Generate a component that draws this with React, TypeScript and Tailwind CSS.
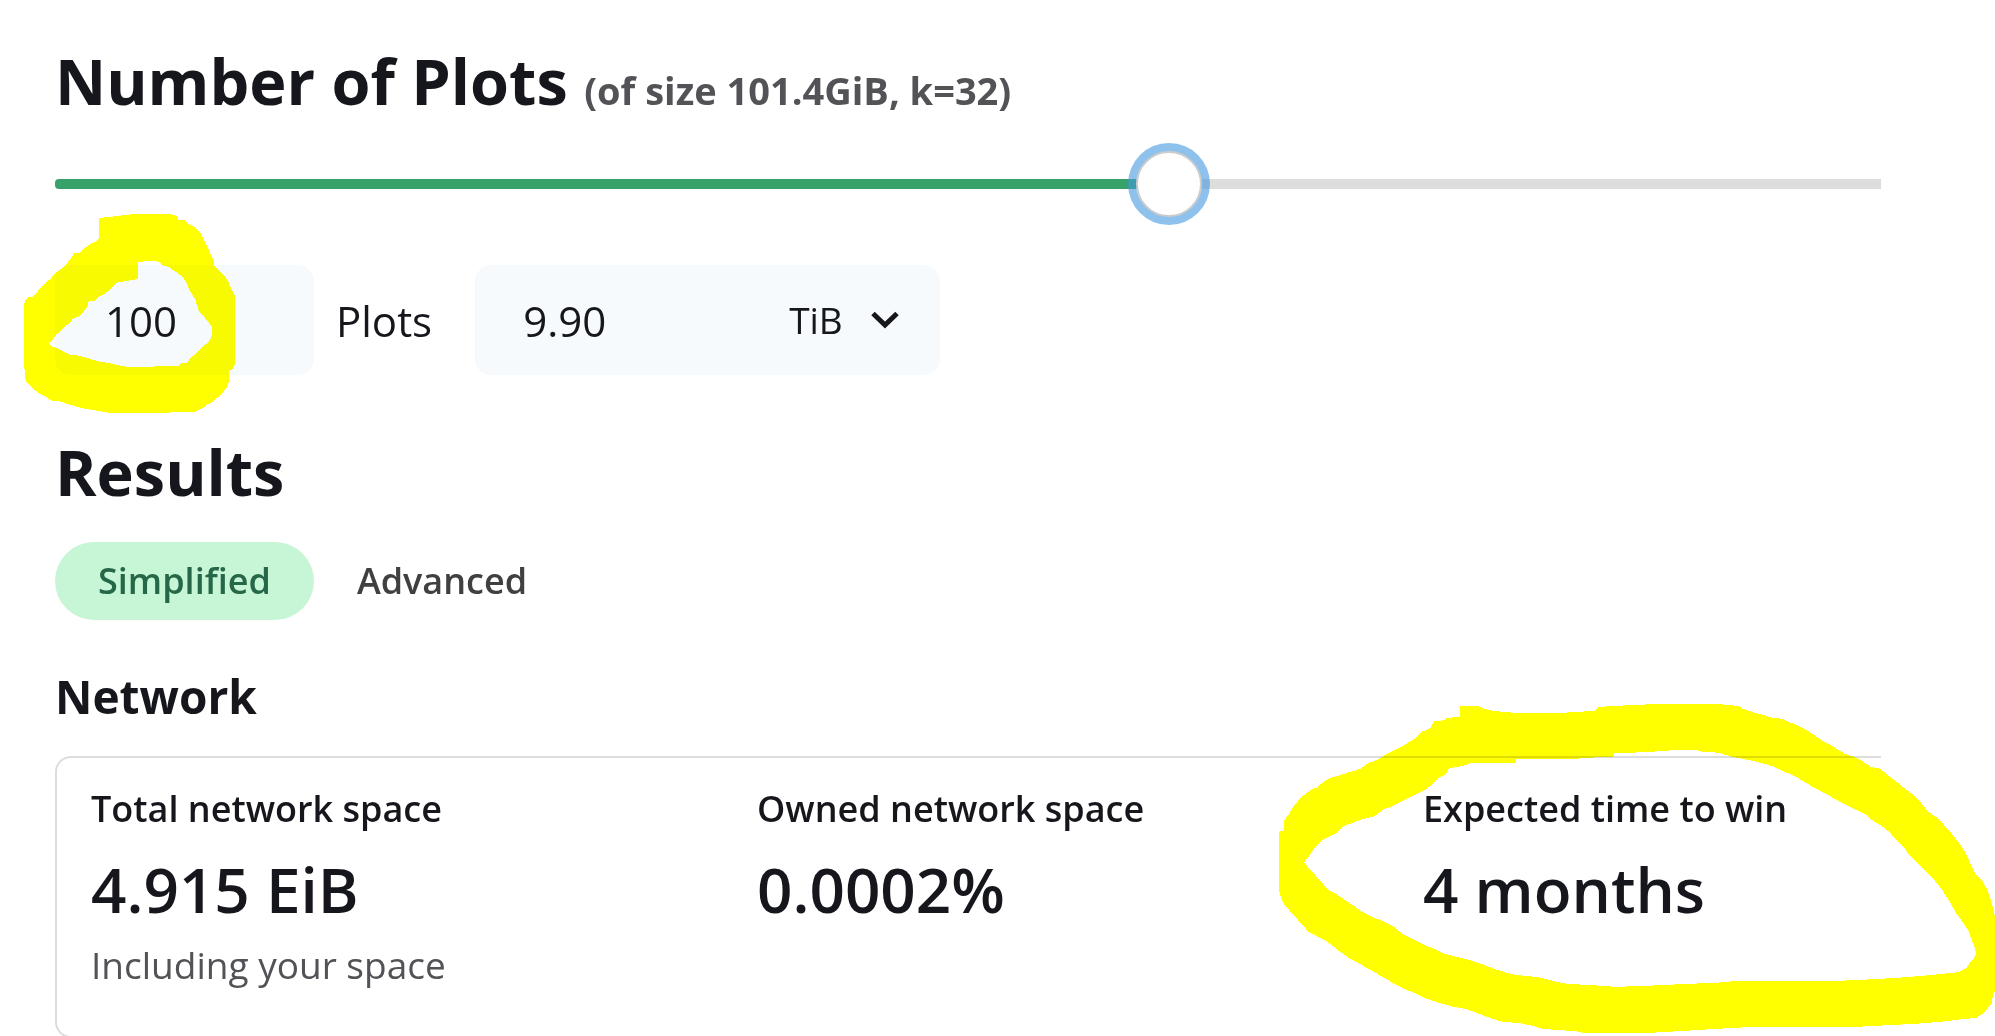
import React, { useState } from "react";

type Stat = { label: string; value: string; help?: string };

const stats: Stat[] = [
  { label: "Total network space", value: "4.915 EiB", help: "Including your space" },
  { label: "Owned network space", value: "0.0002%" },
  { label: "Expected time to win", value: "4 months" },
];

function PlotSlider() {
  const [value, setValue] = useState(614);
  const percent = value / 10;
  const track = {
    "--track": `linear-gradient(to right, #38a169 ${percent}%, #dddddd ${percent}%)`,
  } as React.CSSProperties;
  return (
    <input
      type="range"
      aria-label="Number of plots"
      min={0}
      max={1000}
      value={value}
      onChange={(e) => setValue(Number(e.target.value))}
      style={track}
      className="mt-[34px] block h-[66px] w-full appearance-none bg-transparent outline-none [&::-webkit-slider-runnable-track]:h-[10px] [&::-webkit-slider-runnable-track]:rounded-l [&::-webkit-slider-runnable-track]:[background-image:var(--track)] [&::-webkit-slider-thumb]:-mt-7 [&::-webkit-slider-thumb]:size-[66px] [&::-webkit-slider-thumb]:appearance-none [&::-webkit-slider-thumb]:rounded-full [&::-webkit-slider-thumb]:border-2 [&::-webkit-slider-thumb]:border-[#cccccc] [&::-webkit-slider-thumb]:bg-white [&::-webkit-slider-thumb]:shadow-[0_0_0_8px_rgba(66,153,225,0.6)]"
    />
  );
}

function SizeInputs() {
  return (
    <div className="mt-12 flex h-[110px] items-center text-[42px]">
      <input
        id="plots"
        type="text"
        defaultValue="100"
        className="h-full w-[259px] rounded-2xl bg-[#f7fafd] px-[50px] outline-none"
      />
      <label htmlFor="plots" className="ml-[22px] mr-[43px]">
        Plots
      </label>
      <div className="flex h-full w-[465px] items-center rounded-2xl bg-[#f7fafd]">
        <input
          type="text"
          aria-label="Total size"
          defaultValue="9.90"
          className="h-full w-[314px] bg-transparent pl-12 outline-none"
        />
        <div className="relative h-full flex-1">
          <select
            aria-label="Size unit"
            defaultValue="TiB"
            className="h-full w-full appearance-none bg-transparent text-[37px] outline-none"
          >
            <option>GiB</option>
            <option>TiB</option>
            <option>PiB</option>
          </select>
          <svg
            viewBox="0 0 28 18"
            className="pointer-events-none absolute right-[41px] top-[46px] h-[18px] w-[28px]"
            fill="none"
            stroke="#16161d"
            strokeWidth="5"
          >
            <path d="M2 2.5L14 14L26 2.5" />
          </svg>
        </div>
      </div>
    </div>
  );
}

function Tabs() {
  const [active, setActive] = useState("Simplified");
  return (
    <div role="tablist" className="mt-[34px] flex">
      {["Simplified", "Advanced"].map((name) => (
        <button
          key={name}
          role="tab"
          aria-selected={active === name}
          onClick={() => setActive(name)}
          className={
            active === name
              ? "h-[78px] rounded-full bg-[#c6f6d5] px-[43px] text-[36px] font-semibold text-[#276749]"
              : "h-[78px] rounded-full px-[43px] text-[36px] font-semibold text-[#404040]"
          }
        >
          {name}
        </button>
      ))}
    </div>
  );
}

function PlotsMarker() {
  return (
    <svg
      viewBox="0 0 720 690"
      shapeRendering="crispEdges"
      className="pointer-events-none absolute left-[10px] top-[200px] h-[230px] w-[240px] mix-blend-multiply"
    >
      <path
        fill="#ffff00"
        fillRule="evenodd"
        d="M267 54L297 51L320 48L346 45L372 42H480L493 45L504 51V59H524L530 68L548 77L562 90L574 102L583 123L594 144L602 162L611 180V194L622 206L646 230L655 245L662 262L669 276L675 288V493L669 505L657 515V546L651 561L642 573L630 586L611 601L605 609L594 612L575 626L557 635H480V639H300L265 633L220 625L178 614L154 605L127 602L105 590L89 582L66 563L50 546L45 532V510L42 507V319L45 300L54 292H68L78 280L94 261L106 248L122 237L136 218L163 200L180 178L193 159H208L223 145L243 131L255 127L267 117Z
        M384 186L415 183H436L453 188V195L477 201L498 216L519 231L529 248L537 267L547 284L557 300V308L563 319L567 335L583 351L597 369L606 381V405L602 415L594 427L580 439L566 452L551 467L543 472L530 489H517L506 495V498H432V501H356L322 495L298 489L268 485L236 475L212 468L182 464L165 457L141 444L128 440L115 430L127 420L139 404L163 382L180 367L190 355L207 350L219 337L232 320L236 303H254L269 289L284 281L301 269L322 248L346 243L372 239L384 237Z"
      />
    </svg>
  );
}

function WinTimeMarker() {
  return (
    <svg
      viewBox="0 0 2205 1038"
      shapeRendering="crispEdges"
      className="pointer-events-none absolute left-[1260px] top-[690px] h-[346px] w-[735px] mix-blend-multiply"
    >
      <path
        fill="#ffff00"
        fillRule="evenodd"
        d="M600 48H654L672 57L705 63L735 66L768 69H897L963 65L1005 63L1015 52L1053 48L1122 45L1188 42H1373L1412 46L1434 48L1450 57L1485 69L1516 77L1533 83L1566 86L1592 98L1618 108L1652 128L1683 149L1713 166L1752 190L1796 206L1831 230L1860 236L1888 259L1928 290L1962 316L1987 343L2002 363L2034 385L2076 432L2102 465L2118 492L2129 516L2147 552L2169 575L2183 602L2194 636L2202 660L2205 690V902L2199 915L2195 940L2181 957L2166 973L2148 984L2110 987L2063 993L2002 999L1915 1004L1800 1010H1500L1412 1014L1332 1019L1246 1024L1164 1029H976L942 1023L888 1020L846 1016L822 1009L785 1000L727 995L690 984L651 969L617 957L579 950L534 938L498 926L468 911L431 896L374 865L343 846L303 824L264 802L236 782L201 754L146 726L125 702L101 676L72 643L60 615L57 595V426L72 420V392L86 374L102 346L129 317L152 300L170 293L191 275L209 265L257 250L302 236L324 220L354 208L384 190L424 171L462 147L488 124L512 114L522 94L552 91L560 84L600 80Z
        M636 219H768V207H956V204L1050 201L1060 200L1062 190L1119 188L1214 183L1245 180H1315V184L1373 188L1412 199L1480 213L1530 226L1560 239L1605 259L1660 292L1701 313L1751 342L1783 357L1817 373L1834 389L1861 405L1887 425L1913 455L1933 474L1946 493L1984 531L2021 568L2048 602L2068 633L2089 670L2124 719L2134 747L2144 771L2148 791L2140 809L2128 819L2121 832L2098 846L2061 850L2005 856L1905 864L1830 868L1728 873H1425L1371 878L1252 883L1170 887L1084 890H1053V888L976 885L942 882L909 880L882 873L836 862L803 858L768 855L714 841L693 833L662 821L632 811L600 803L558 793L527 778L498 767L467 751L426 730L396 706L362 690L337 682L302 662L264 636L240 619L202 598L192 585L152 540L132 518L150 494L164 474L186 451L207 439L225 432L249 408L278 399L302 389L344 378L372 357L399 349L430 330L461 317L492 302L516 284L533 265L558 252L568 234L596 231Z"
      />
    </svg>
  );
}

export default function App() {
  return (
    <div className="relative h-screen overflow-hidden bg-white font-['Open_Sans',sans-serif] text-[#16161d]">
      <main className="mr-[114px] h-full overflow-hidden pl-[55px] pt-[45px]">
        <h2 className="text-[63px] font-bold leading-[72px]">
          Number of Plots{" "}
          <span className="text-[38px] leading-none text-[#525257]">(of size 101.4GiB, k=32)</span>
        </h2>
        <PlotSlider />
        <SizeInputs />
        <h2 className="mt-[61px] text-[63px] font-bold leading-[72px]">Results</h2>
        <Tabs />
        <h3 className="mt-[46px] text-[46px] font-bold leading-[60px]">Network</h3>
        <dl className="-mr-[244px] mt-[30px] grid grid-cols-3 rounded-2xl border-2 border-[#dddddd] px-[34px] pb-[47px] pt-[27px]">
          {stats.map((s) => (
            <div key={s.label}>
              <dt className="text-[36px] font-semibold leading-[48px]">{s.label}</dt>
              <dd className="mt-5 text-[62px] font-semibold leading-[72px]">{s.value}</dd>
              {s.help && (
                <dd className="mt-4 text-[37px] leading-[48px] text-[#525257]">{s.help}</dd>
              )}
            </div>
          ))}
        </dl>
      </main>
      <PlotsMarker />
      <WinTimeMarker />
    </div>
  );
}
